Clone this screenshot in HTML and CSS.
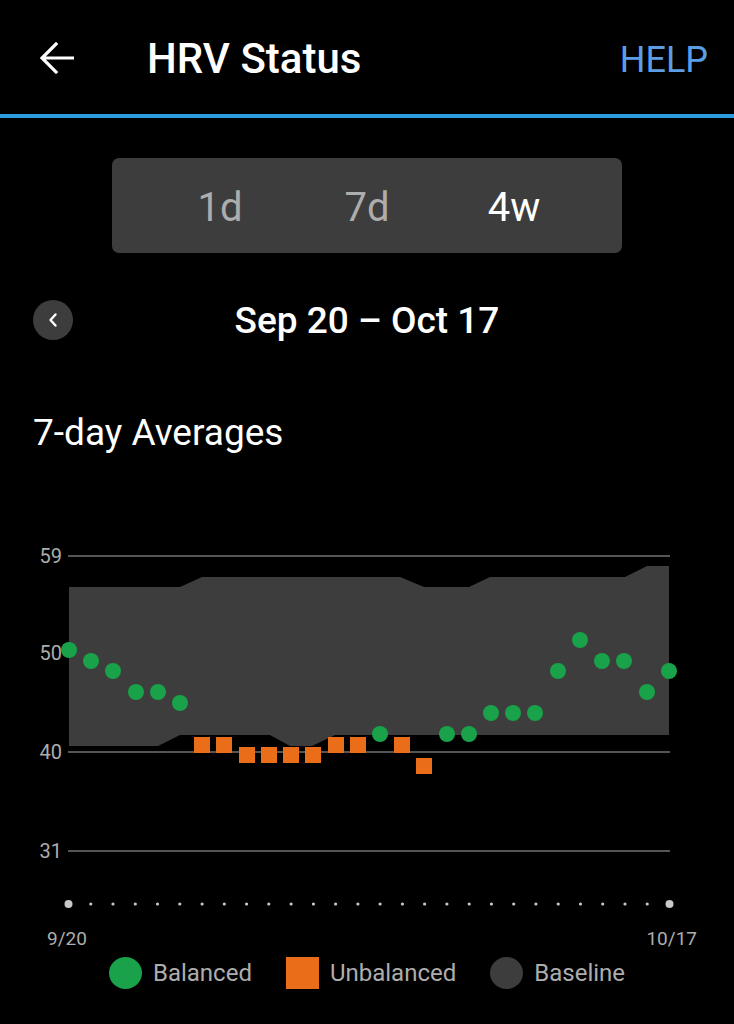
FILE: index.html
```html
<!DOCTYPE html>
<html lang="en">
<head>
    <meta charset="UTF-8">
    <meta name="viewport" content="width=device-width, initial-scale=1.0">
    <title>HRV Status</title>
    <link rel="stylesheet" href="styles.css">
</head>
<body>

    <header class="top-bar">
        <button class="back-button" aria-label="Back">
            <svg width="34" height="32" viewBox="0 0 34 32">
                <path d="M33 16 H3 M16 2 L2 16 L16 30" fill="none" stroke="#fff" stroke-width="3.2" stroke-linecap="square"/>
            </svg>
        </button>
        <h1 class="page-title">HRV Status</h1>
        <a class="help-link" href="#">HELP</a>
    </header>

    <main class="content">
        <div class="range-tabs">
            <span class="range-tab">1d</span>
            <span class="range-tab">7d</span>
            <span class="range-tab active">4w</span>
        </div>

        <div class="date-row">
            <button class="prev-button" aria-label="Previous">
                <svg width="12" height="16" viewBox="0 0 12 16">
                    <path d="M8.5 2.5 L3.5 8 L8.5 13.5" fill="none" stroke="#fff" stroke-width="2.4" stroke-linecap="round" stroke-linejoin="round"/>
                </svg>
            </button>
            <div class="date-range">Sep 20 – Oct 17</div>
        </div>

        <h2 class="section-title">7-day Averages</h2>

        <svg class="hrv-chart" width="734" height="420" viewBox="0 0 734 420">
            <!-- grid -->
            <g class="grid">
                <line x1="68" y1="26" x2="670" y2="26"/>
                <line x1="68" y1="222" x2="670" y2="222"/>
                <line x1="68" y1="321" x2="670" y2="321"/>
            </g>
            <g class="y-labels">
                <text x="62" y="33">59</text>
                <text x="62" y="130">50</text>
                <text x="62" y="229">40</text>
                <text x="62" y="328">31</text>
            </g>

            <!-- baseline band -->
            <polygon class="baseline"
                points="69,57 180,57 202,47 400,47 424,57 469,57 490,47 625,47 647,36 669,36 669,205 335,205 312,216 290,216 270,205 180,205 158,216 69,216"/>

            <!-- daily averages -->
            <g class="balanced">
                <circle cx="69" cy="120" r="8"/>
                <circle cx="91" cy="131" r="8"/>
                <circle cx="113" cy="141" r="8"/>
                <circle cx="136" cy="162" r="8"/>
                <circle cx="158" cy="162" r="8"/>
                <circle cx="180" cy="173" r="8"/>
                <circle cx="380" cy="204" r="8"/>
                <circle cx="447" cy="204" r="8"/>
                <circle cx="469" cy="204" r="8"/>
                <circle cx="491" cy="183" r="8"/>
                <circle cx="513" cy="183" r="8"/>
                <circle cx="535" cy="183" r="8"/>
                <circle cx="558" cy="141" r="8"/>
                <circle cx="580" cy="110" r="8"/>
                <circle cx="602" cy="131" r="8"/>
                <circle cx="624" cy="131" r="8"/>
                <circle cx="647" cy="162" r="8"/>
                <circle cx="669" cy="141" r="8"/>
            </g>
            <g class="unbalanced">
                <rect x="194" y="207" width="16" height="16"/>
                <rect x="216" y="207" width="16" height="16"/>
                <rect x="239" y="217" width="16" height="16"/>
                <rect x="261" y="217" width="16" height="16"/>
                <rect x="283" y="217" width="16" height="16"/>
                <rect x="305" y="217" width="16" height="16"/>
                <rect x="328" y="207" width="16" height="16"/>
                <rect x="350" y="207" width="16" height="16"/>
                <rect x="394" y="207" width="16" height="16"/>
                <rect x="416" y="228" width="16" height="16"/>
            </g>

            <!-- x axis -->
            <g class="axis-dots" id="axis-dots"></g>
            <g class="x-labels">
                <text x="47" y="415">9/20</text>
                <text x="697" y="415" text-anchor="end">10/17</text>
            </g>
        </svg>

        <div class="legend">
            <div class="legend-item"><span class="swatch dot-green"></span>Balanced</div>
            <div class="legend-item"><span class="swatch square-orange"></span>Unbalanced</div>
            <div class="legend-item"><span class="swatch dot-gray"></span>Baseline</div>
        </div>
    </main>

    <script>
        // one tick per day, the first and last one bigger
        const axis = document.getElementById('axis-dots');
        const days = 28;
        for (let i = 0; i < days; i++) {
            const dot = document.createElementNS('http://www.w3.org/2000/svg', 'circle');
            const edge = i === 0 || i === days - 1;
            dot.setAttribute('cx', (68.5 + i * 601 / (days - 1)).toFixed(1));
            dot.setAttribute('cy', 374);
            dot.setAttribute('r', edge ? 4 : 1.6);
            axis.appendChild(dot);
        }
    </script>
</body>
</html>
```

FILE: styles.css
```css
:root {
    --accent-blue: #2d9de0;
    --help-blue: #5b9ee6;
    --panel-gray: #3d3d3d;
    --muted-text: #adadad;
    --balanced-green: #19a24a;
    --unbalanced-orange: #ea6d1a;
}

html, body {
    margin: 0;
    padding: 0;
    background: #000;
    color: #fff;
    font-family: Roboto, "Noto Sans", Arial, sans-serif;
}

button {
    border: none;
    background: none;
    padding: 0;
    cursor: pointer;
}

/* Top bar */
.top-bar {
    display: flex;
    align-items: center;
    height: 112px;
    padding: 2px 26px 0 40px;
    border-bottom: 4px solid var(--accent-blue);
}

.back-button {
    display: flex;
    width: 34px;
    height: 32px;
}

.page-title {
    margin: 0 0 0 73px;
    font-size: 42px;
    font-weight: 500;
    flex: 1;
}

.help-link {
    padding-top: 4px;
    color: var(--help-blue);
    font-size: 36px;
    text-decoration: none;
}

/* Range selector */
.range-tabs {
    display: flex;
    justify-content: center;
    align-items: center;
    width: 510px;
    height: 95px;
    margin: 40px auto 0;
    padding-top: 4px;
    box-sizing: border-box;
    background: var(--panel-gray);
    border-radius: 7px;
}

.range-tab {
    width: 147px;
    text-align: center;
    font-size: 40px;
    color: var(--muted-text);
}

.range-tab.active {
    color: #fff;
}

/* Date row */
.date-row {
    position: relative;
    display: flex;
    justify-content: center;
    align-items: center;
    height: 40px;
    margin-top: 47px;
}

.prev-button {
    position: absolute;
    left: 33px;
    top: 0;
    width: 40px;
    height: 40px;
    border-radius: 50%;
    background: var(--panel-gray);
    display: flex;
    justify-content: center;
    align-items: center;
}

.date-range {
    font-size: 37px;
    font-weight: 500;
}

.section-title {
    margin: 71px 0 0 33px;
    font-size: 37px;
    font-weight: 400;
}

/* Chart */
.hrv-chart {
    display: block;
    margin-top: 76px;
}

.grid line {
    stroke: #555;
    stroke-width: 2;
}

.y-labels text {
    fill: var(--muted-text);
    font-size: 20px;
    text-anchor: end;
}

.x-labels text {
    fill: var(--muted-text);
    font-size: 19px;
}

.baseline {
    fill: var(--panel-gray);
}

.balanced circle {
    fill: var(--balanced-green);
}

.unbalanced rect {
    fill: var(--unbalanced-orange);
}

.axis-dots circle {
    fill: #c8c8c8;
}

/* Legend */
.legend {
    display: flex;
    justify-content: center;
    gap: 34px;
    margin-top: 7px;
}

.legend-item {
    display: flex;
    align-items: center;
    gap: 11px;
    font-size: 24px;
    color: var(--muted-text);
}

.swatch {
    width: 33px;
    height: 32px;
}

.dot-green {
    border-radius: 50%;
    background: var(--balanced-green);
}

.square-orange {
    background: var(--unbalanced-orange);
}

.dot-gray {
    border-radius: 50%;
    background: var(--panel-gray);
}
```
